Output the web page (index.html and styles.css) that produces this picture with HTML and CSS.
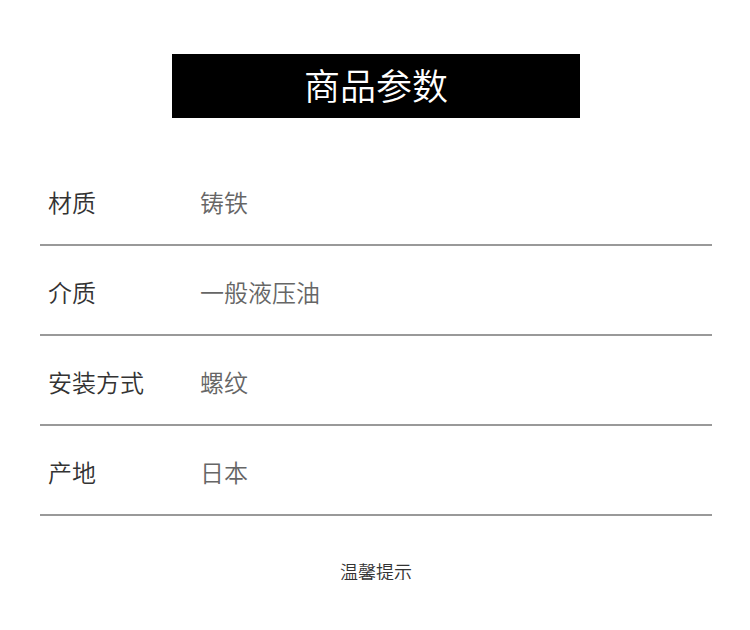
FILE: index.html
```html
<!DOCTYPE html>
<html lang="zh-CN">
<head>
<meta charset="utf-8">
<title>商品参数</title>
<link rel="stylesheet" href="styles.css">
</head>
<body>
<div class="wrap">
  <div class="title-box"><h1 class="title">商品参数</h1></div>
  <div class="params">
    <div class="row"><span class="label">材质</span><span class="value">铸铁</span></div>
    <div class="row"><span class="label">介质</span><span class="value">一般液压油</span></div>
    <div class="row"><span class="label">安装方式</span><span class="value">螺纹</span></div>
    <div class="row"><span class="label">产地</span><span class="value">日本</span></div>
  </div>
  <p class="tip">温馨提示</p>
</div>
</body>
</html>
```

FILE: styles.css
```css
html, body {
  margin: 0;
  padding: 0;
  background: #fff;
  font-family: "Noto Sans CJK SC", "Noto Sans", sans-serif;
  font-weight: 350;
}
.wrap {
  width: 672px;
  margin-left: 40px;
  padding-top: 54px;
}
.title-box {
  width: 408px;
  height: 64px;
  margin: 0 auto;
  background: #000;
  display: flex;
  align-items: center;
  justify-content: center;
}
.title {
  margin: 0 0 4px;
  color: #fff;
  font-size: 36px;
  font-weight: 350;
  line-height: 36px;
}
.params {
  margin-top: 38px;
}
.row {
  display: flex;
  align-items: center;
  height: 88px;
  padding: 0 8px;
  border-bottom: 2px solid #999;
  box-sizing: content-box;
}
.row .label {
  width: 152px;
  color: #333;
  font-size: 24px;
  line-height: 24px;
  padding-top: 4px;
}
.row .value {
  color: #666;
  font-size: 24px;
  line-height: 24px;
  padding-top: 4px;
}
.tip {
  margin: 46px 0 0;
  text-align: center;
  color: #333;
  font-size: 18px;
  line-height: 18px;
}
```
